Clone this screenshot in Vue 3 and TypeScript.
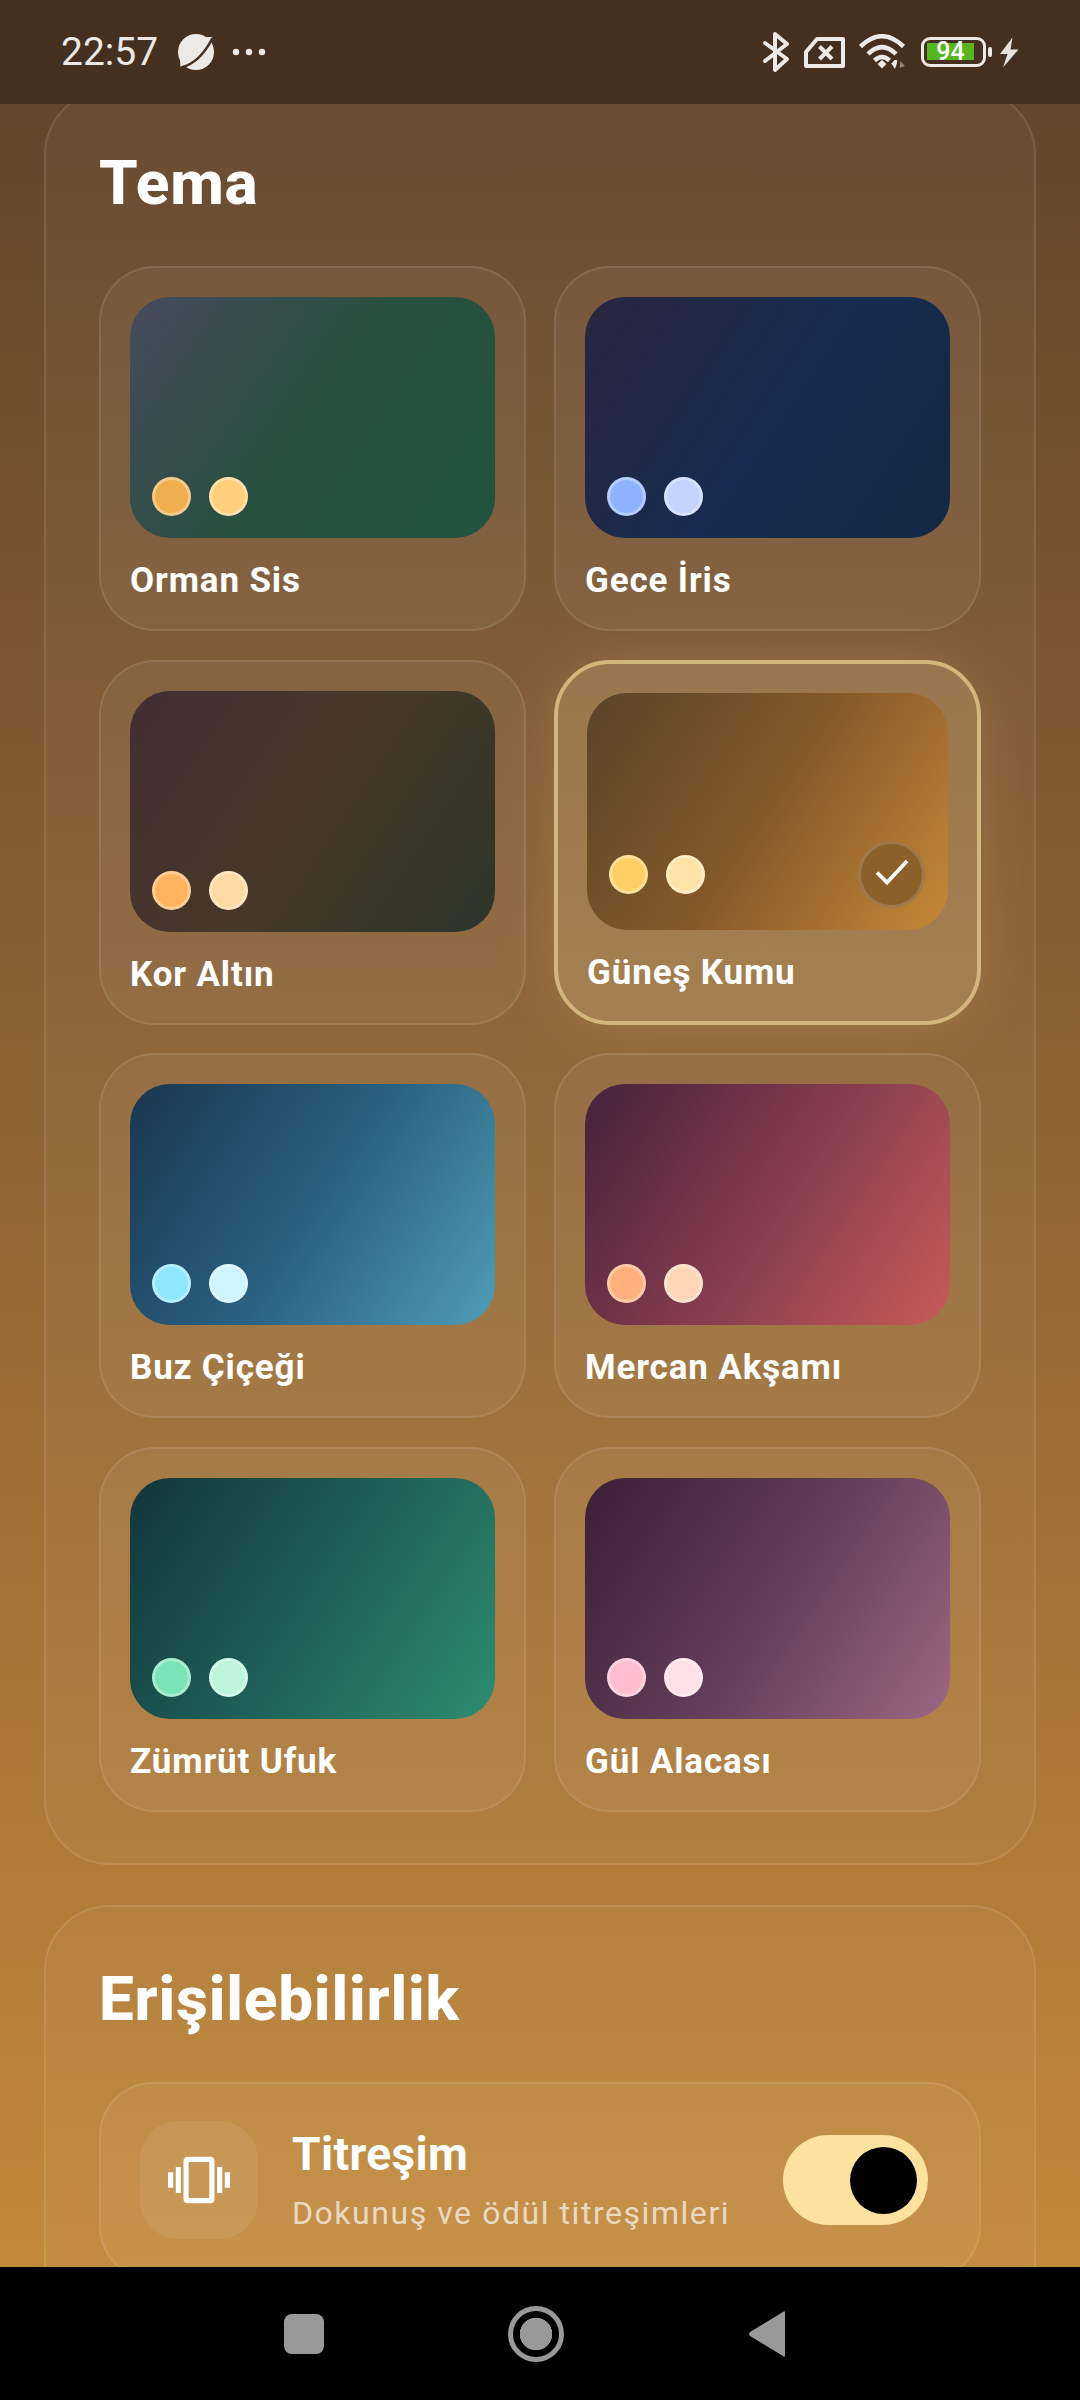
<script setup lang="ts">
// Ayarlar ekranı: tema seçici ızgarası ve erişilebilirlik satırı.
interface Theme {
  name: string
  from: string
  mid: string
  to: string
  dots: [string, string]
  active?: boolean
}

const themes: Theme[] = [
  { name: 'Orman Sis', from: '#474a5c', mid: '#27503f', to: '#22543f', dots: ['#f0ae4e', '#ffcf7c'] },
  { name: 'Gece İris', from: '#2b2540', mid: '#172c50', to: '#122843', dots: ['#8fb2ff', '#c3d3ff'] },
  { name: 'Kor Altın', from: '#432e33', mid: '#463827', to: '#2d352a', dots: ['#ffb35c', '#ffd9a3'] },
  { name: 'Güneş Kumu', from: '#5a4228', mid: '#855a2a', to: '#c68837', dots: ['#ffcf66', '#ffe3a6'], active: true },
  { name: 'Buz Çiçeği', from: '#1a3650', mid: '#2a6080', to: '#4f9db6', dots: ['#8fe6ff', '#cdf4ff'] },
  { name: 'Mercan Akşamı', from: '#45213c', mid: '#853c4e', to: '#c75c58', dots: ['#ffb07c', '#ffd6b8'] },
  { name: 'Zümrüt Ufuk', from: '#133539', mid: '#1e5f57', to: '#2d8d71', dots: ['#7be3b8', '#bdf5dc'] },
  { name: 'Gül Alacası', from: '#3b1f36', mid: '#633c58', to: '#9c6882', dots: ['#ffbdd0', '#ffe0e8'] },
]

// corner-to-corner sweep across the 365x242 preview
function previewBg(t: Theme) {
  return { background: `linear-gradient(123.5deg, ${t.from}, ${t.mid} 50%, ${t.to})` }
}
</script>

<template>
  <div class="screen">
    <header class="status">
      <div class="status-left">
        <span class="time">22:57</span>
        <svg class="planet" width="40" height="40" viewBox="0 0 40 40">
          <circle cx="20" cy="20" r="18" fill="#ece9e6" />
          <path d="M30 5 L36.5 5 L35 12 Z M4 27 L4.500 35 L12 35 Z" fill="#ece9e6" />
          <path d="M5 35.500 Q24 31 36.500 6" fill="none" stroke="#45301f" stroke-width="2.500" />
        </svg>
        <svg class="more" width="36" height="8" viewBox="0 0 36 8" fill="#ece9e6">
          <circle cx="5" cy="4" r="3.200" />
          <circle cx="18" cy="4" r="3.200" />
          <circle cx="31" cy="4" r="3.200" />
        </svg>
      </div>
      <div class="status-right">
        <svg width="29" height="42" viewBox="0 0 29 42" fill="none" stroke="#ece9e6" stroke-width="4" stroke-linejoin="round" stroke-linecap="round">
          <path d="M4 12 L26 28 L14 39 V3 L26 13 L4 30" />
        </svg>
        <svg width="45" height="35" viewBox="0 0 45 35" fill="none" stroke="#ece9e6" stroke-linejoin="round">
          <path d="M4 17 L15 4 H41 V31 H4 Z" stroke-width="4" />
          <path d="M17.500 11.500 L30 24 M30 11.500 L17.500 24" stroke-width="4" />
        </svg>
        <svg width="48" height="36" viewBox="0 0 48 36" fill="none" stroke="#ece9e6" stroke-width="4.500">
          <path d="M1.500 12.500 Q23 -8 44.500 12.500" />
          <path d="M9 20 Q23 6 37 20" />
          <path d="M15.500 26.500 Q23 19.500 30.500 26.500" />
          <path d="M18.500 30 L23 26 L27.500 30 L23 34.500 Z" fill="#ece9e6" stroke="none" />
          <path d="M33 29 H38 V26 L35.500 26 Z M32 29 L36 35 L38 29 Z" fill="#ece9e6" stroke="none" />
          <path d="M41 27 L46 32 L41 34 Z" fill="#8f8579" stroke="none" />
        </svg>
        <div class="battery">
          <div class="battery-body">
            <span class="battery-fill">94</span>
          </div>
          <i class="battery-tip"></i>
          <svg class="bolt" width="20" height="31" viewBox="0 0 20 31" fill="#e6e3de">
            <path d="M13.500 0.500 L1 17 H8.500 L4 30.500 L19.500 12.500 H11.500 Z" />
          </svg>
        </div>
      </div>
    </header>

    <main class="scroll">
      <section class="card card-theme">
        <h2 class="card-title">Tema</h2>
        <div class="theme-grid">
          <button
            v-for="t in themes"
            :key="t.name"
            class="tile"
            :class="{ 'tile-active': t.active }"
          >
            <div class="preview" :style="previewBg(t)">
              <div class="preview-row">
                <span v-for="c in t.dots" :key="c" class="dot" :style="{ backgroundColor: c }"></span>
                <span v-if="t.active" class="check">
                  <svg width="36" height="30" viewBox="0 0 36 30" fill="none" stroke="#fff" stroke-width="3.800">
                    <path d="M3 13.500 L13 23.500 L33 2" />
                  </svg>
                </span>
              </div>
            </div>
            <span class="tile-label">{{ t.name }}</span>
          </button>
        </div>
      </section>

      <section class="card">
        <h2 class="card-title">Erişilebilirlik</h2>
        <div class="setting">
          <div class="setting-icon">
            <svg width="62" height="62" viewBox="0 0 24 24" fill="#fff">
              <path d="M0 15h2V9H0v6zm3 2h2V7H3v10zm19-8v6h2V9h-2zm-3 8h2V7h-2v10zM16.500 3h-9C6.670 3 6 3.670 6 4.500v15c0 .83.67 1.500 1.500 1.500h9c.83 0 1.500-.67 1.500-1.500v-15c0-.83-.67-1.500-1.500-1.500zM16 19H8V5h8v14z" />
            </svg>
          </div>
          <div class="setting-text">
            <span class="setting-name">Titreşim</span>
            <span class="setting-sub">Dokunuş ve ödül titreşimleri</span>
          </div>
          <div class="toggle"><i class="thumb"></i></div>
        </div>
      </section>
    </main>

    <nav class="navbar">
      <i class="nav-square"></i>
      <i class="nav-circle"></i>
      <svg width="38" height="48" viewBox="0 0 38 48" fill="#999">
        <path d="M37 3 Q37 0 35 2 L2 22 Q0 24 2 26 L35 46 Q37 48 37 45 Z" />
      </svg>
    </nav>
  </div>
</template>

<style>
html,
body {
  margin: 0;
  padding: 0;
}
</style>

<style scoped>
.screen {
  width: 1080px;
  height: 2400px;
  display: flex;
  flex-direction: column;
  overflow: hidden;
  font-family: Roboto, 'Noto Sans', sans-serif;
  color: #fff;
  background: linear-gradient(180deg, #60422a 0, #8c6233 1050px, #c2883a 2267px);
}

/* status bar */
.status {
  flex: none;
  height: 104px;
  box-sizing: border-box;
  padding: 0 61px 0 61px;
  display: flex;
  align-items: center;
  justify-content: space-between;
  background: #45301f;
  color: #ece9e6;
}
.status-left {
  display: flex;
  align-items: center;
}
.time {
  font-size: 39px;
  line-height: 44px;
}
.planet {
  margin-left: 18px;
}
.more {
  margin-left: 15px;
}
.status-right {
  display: flex;
  align-items: center;
  gap: 12px;
}
.battery {
  display: flex;
  align-items: center;
  margin-left: 2px;
}
.battery-body {
  width: 65px;
  height: 30px;
  box-sizing: border-box;
  border: 3.5px solid #ece9e6;
  border-radius: 9px;
  padding: 3px;
}
.battery-fill {
  display: block;
  width: 47px;
  height: 17px;
  background: #57b51f;
  color: #fff;
  font-size: 25px;
  font-weight: 500;
  line-height: 17px;
  text-align: center;
}
.battery-tip {
  width: 4px;
  height: 10px;
  margin-left: 2px;
  border-radius: 2px;
  background: #ece9e6;
}
.bolt {
  margin-left: 7px;
}

/* scrolling content, clipped under the status bar */
.scroll {
  flex: 1;
  min-height: 0;
  overflow: hidden;
  padding: 0 44px;
}
.card {
  box-sizing: border-box;
  padding: 56px 53px 53px;
  border: 2px solid rgba(255, 255, 255, 0.1);
  border-radius: 66px;
  background: rgba(255, 255, 255, 0.035);
}
.card-theme {
  margin-top: -15px;
  margin-bottom: 40px;
  padding-bottom: 51.500px;
}
.card-title {
  margin: 0 0 47px;
  font-size: 62px;
  font-weight: 800;
  line-height: 72px;
  letter-spacing: 0.8px;
}

.theme-grid {
  display: grid;
  grid-template-columns: 1fr 1fr;
  gap: 28.500px 28px;
}
.tile {
  height: 365px;
  box-sizing: border-box;
  display: flex;
  flex-direction: column;
  padding: 29px 29px 28px;
  border: 2px solid rgba(255, 255, 255, 0.1);
  border-radius: 56px;
  background: rgba(255, 255, 255, 0.05);
  color: inherit;
  font: inherit;
  text-align: left;
}
.tile-active {
  border: 4px solid #d3b67a;
  background: rgba(255, 232, 170, 0.2);
  box-shadow: 0 0 60px rgba(255, 225, 160, 0.16);
}
.preview {
  flex: 1;
  min-height: 0;
  display: flex;
  flex-direction: column;
  justify-content: flex-end;
  box-sizing: border-box;
  padding: 0 23px 22px 22px;
  border-radius: 40px;
}
.preview-row {
  display: flex;
  align-items: center;
  gap: 18px;
}
.dot {
  width: 39px;
  height: 39px;
  box-sizing: border-box;
  border: 3px solid rgba(255, 255, 255, 0.35);
  border-radius: 50%;
}
.check {
  width: 67px;
  height: 67px;
  box-sizing: border-box;
  margin-left: auto;
  display: flex;
  align-items: center;
  justify-content: center;
  border: 3px solid rgba(255, 255, 255, 0.16);
  border-radius: 50%;
  background: #8c6029;
}
.tile-label {
  margin-top: 23px;
  font-size: 35px;
  font-weight: 700;
  line-height: 40px;
  letter-spacing: 0.85px;
}

/* accessibility row */
.setting {
  display: flex;
  align-items: center;
  padding: 37px 51px 39px 39px;
  border: 2px solid rgba(255, 255, 255, 0.1);
  border-radius: 54px;
  background: rgba(255, 255, 255, 0.05);
}
.setting-icon {
  flex: none;
  width: 118px;
  height: 118px;
  display: flex;
  align-items: center;
  justify-content: center;
  border-radius: 38px;
  background: rgba(255, 255, 255, 0.08);
}
.setting-text {
  flex: 1;
  min-width: 0;
  margin-left: 34px;
  display: flex;
  flex-direction: column;
  gap: 14px;
}
.setting-name {
  font-size: 46px;
  font-weight: 700;
  line-height: 52px;
  letter-spacing: 0.4px;
}
.setting-sub {
  font-size: 32px;
  line-height: 38px;
  letter-spacing: 1.55px;
  color: rgba(255, 255, 255, 0.68);
}
.toggle {
  flex: none;
  width: 145px;
  height: 90px;
  box-sizing: border-box;
  padding-right: 11px;
  display: flex;
  align-items: center;
  justify-content: flex-end;
  border-radius: 45px;
  background: #fde19e;
}
.thumb {
  width: 67px;
  height: 67px;
  border-radius: 50%;
  background: #000;
}

/* system navigation */
.navbar {
  flex: none;
  height: 133px;
  box-sizing: border-box;
  padding-right: 11px;
  display: flex;
  align-items: center;
  justify-content: center;
  gap: 184px;
  background: #000;
}
.nav-square {
  width: 40px;
  height: 40px;
  border-radius: 8px;
  background: #999;
}
.nav-circle {
  width: 56px;
  height: 56px;
  box-sizing: border-box;
  border: 5px solid #999;
  border-radius: 50%;
  background: radial-gradient(circle, #999 0 16px, transparent 16.5px);
}
</style>
